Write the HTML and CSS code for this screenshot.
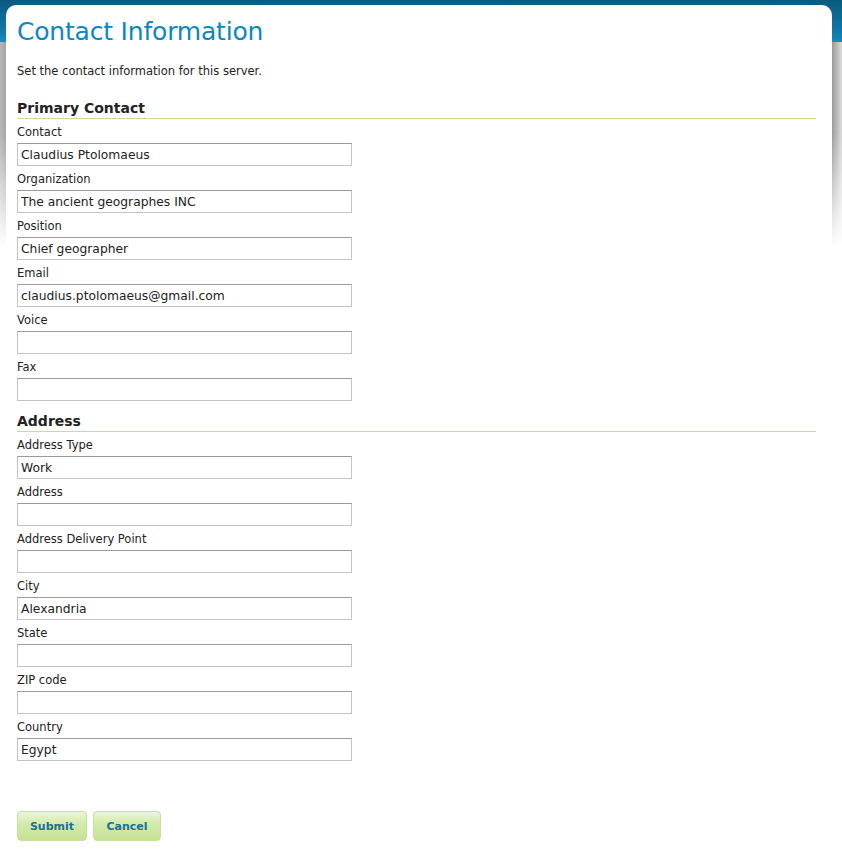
FILE: index.html
```html
<!DOCTYPE html>
<html lang="en">
<head>
  <meta charset="UTF-8">
  <meta name="viewport" content="width=device-width, initial-scale=1.0">
  <title>Contact Information</title>
  <link rel="stylesheet" href="styles.css">
</head>
<body>
  <div class="page">
    <h1>Contact Information</h1>
    <p class="intro">Set the contact information for this server.</p>

    <form class="contact-form">
      <h2>Primary Contact</h2>
      <div class="field">
        <label for="contact">Contact</label>
        <input id="contact" type="text" value="Claudius Ptolomaeus">
      </div>
      <div class="field">
        <label for="org">Organization</label>
        <input id="org" type="text" value="The ancient geographes INC">
      </div>
      <div class="field">
        <label for="position">Position</label>
        <input id="position" type="text" value="Chief geographer">
      </div>
      <div class="field">
        <label for="email">Email</label>
        <input id="email" type="text" value="claudius.ptolomaeus@gmail.com">
      </div>
      <div class="field">
        <label for="voice">Voice</label>
        <input id="voice" type="text" value="">
      </div>
      <div class="field">
        <label for="fax">Fax</label>
        <input id="fax" type="text" value="">
      </div>

      <h2 class="section-gap">Address</h2>
      <div class="field">
        <label for="addrtype">Address Type</label>
        <input id="addrtype" type="text" value="Work">
      </div>
      <div class="field">
        <label for="address">Address</label>
        <input id="address" type="text" value="">
      </div>
      <div class="field">
        <label for="delivery">Address Delivery Point</label>
        <input id="delivery" type="text" value="">
      </div>
      <div class="field">
        <label for="city">City</label>
        <input id="city" type="text" value="Alexandria">
      </div>
      <div class="field">
        <label for="state">State</label>
        <input id="state" type="text" value="">
      </div>
      <div class="field">
        <label for="zip">ZIP code</label>
        <input id="zip" type="text" value="">
      </div>
      <div class="field">
        <label for="country">Country</label>
        <input id="country" type="text" value="Egypt">
      </div>

      <div class="buttons">
        <button type="submit" class="btn btn-submit">Submit</button>
        <button type="button" class="btn btn-cancel">Cancel</button>
      </div>
    </form>
  </div>
</body>
</html>
```

FILE: styles.css
```css
html, body {
  margin: 0;
  padding: 0;
}

body {
  font-family: "DejaVu Sans", Verdana, sans-serif;
  font-size: 11.5px;
  color: #222;
  background-color: #fff;
  background-image:
    linear-gradient(to bottom, #0a5a7f 0, #0f77a6 30px, #1a8ac0 42px),
    linear-gradient(to bottom, rgba(255,255,255,0) 0, rgba(255,255,255,0) 90px, #fff 205px),
    linear-gradient(to right, #b8b8b8 0, #a4a4a4 6px, #fff 6px, #fff 832px, #9a9a9a 832px, #dcdcdc 842px);
  background-repeat: no-repeat;
  background-position: 0 0, 0 42px, 0 42px;
  background-size: 100% 42px, 100% 205px, 100% 205px;
}

.page {
  margin: 5px 10px 0 6px;
  padding: 1px 16px 10px 11px;
  background: #fff;
  border-radius: 10px 10px 0 0;
  min-height: 835px;
  box-sizing: border-box;
}

h1 {
  margin: 10px 0 0;
  font-size: 25px;
  line-height: 32px;
  font-weight: normal;
  color: #0d86c1;
  letter-spacing: -0.2px;
}

.intro {
  margin: 16px 0 0;
  line-height: 15px;
}

h2 {
  margin: 19px 0 6px;
  font-size: 14px;
  line-height: 20px;
  font-weight: bold;
  color: #222;
  border-bottom: 1px solid #c3df91;
}

h2.section-gap {
  margin-top: 10px;
}

.field {
  display: flex;
  flex-direction: column;
  align-items: flex-start;
  margin-bottom: 6px;
}

.field label {
  line-height: 15px;
  margin-bottom: 3px;
}

.field input {
  width: 335px;
  height: 23px;
  box-sizing: border-box;
  margin: 0;
  padding: 1px 3px 0;
  border: 1px solid #c4c4c4;
  border-top-color: #9a9a9a;
  font-family: "DejaVu Sans", Verdana, sans-serif;
  font-size: 12.3px;
  color: #222;
  background: #fff;
}

.buttons {
  display: flex;
  gap: 6px;
  margin-top: 50px;
}

.btn {
  height: 30px;
  padding: 0;
  border: 1px solid #c5df9e;
  border-radius: 4px;
  background: linear-gradient(to bottom, #eaf6d6 0, #d2eaa8 45%, #c6e296 100%);
  font-family: "DejaVu Sans", Verdana, sans-serif;
  font-size: 11px;
  font-weight: bold;
  color: #1c6e9c;
  cursor: pointer;
}

.btn-submit {
  width: 70px;
}

.btn-cancel {
  width: 68px;
}
```
